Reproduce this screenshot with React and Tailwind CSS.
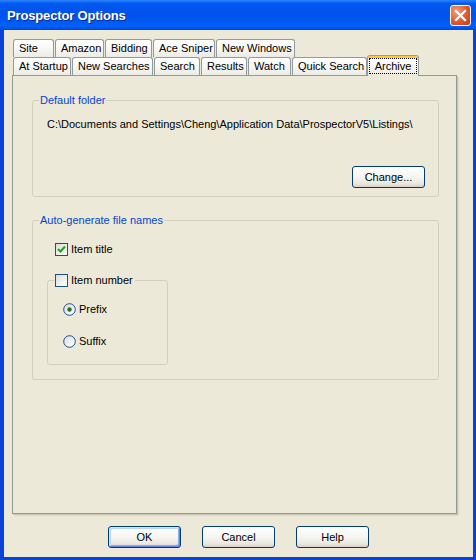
import React from 'react';

const row1 = [
  { label: 'Site', w: 'w-[41px]' },
  { label: 'Amazon', w: 'w-[49px]' },
  { label: 'Bidding', w: 'w-[47px]' },
  { label: 'Ace Sniper', w: 'w-[62px]' },
  { label: 'New Windows', w: 'w-[79px]' },
];

const row2 = [
  { label: 'At Startup', w: 'w-[58px]' },
  { label: 'New Searches', w: 'w-[81px]' },
  { label: 'Search', w: 'w-[46px]' },
  { label: 'Results', w: 'w-[46px]' },
  { label: 'Watch', w: 'w-[43px]' },
  { label: 'Quick Search', w: 'w-[75px]' },
];

const Tab = ({ label, w }) => (
  <div className={`${w} h-[18px] shrink-0 border border-b-0 border-[#919b9c] rounded-t-[3px] bg-[linear-gradient(#ffffff,#f7f7f4_50%,#ecebe5)] pl-[5px] leading-[17px] whitespace-nowrap`}>
    {label}
  </div>
);

const ActiveTab = ({ label }) => (
  <div className="relative z-10 -ml-[1px] -mt-[2px] self-start w-[52px] h-[21px] shrink-0 border border-b-0 border-[#919b9c] border-t-[#e68b2c] rounded-t-[3px] bg-[linear-gradient(#ffffff,#f8f7f2_60%,#ece9d8)] shadow-[inset_0_2px_0_#ffc73c] pt-[2px] px-[1px]">
    <div className="h-[16px] border border-dotted border-black text-center leading-[14px]">{label}</div>
  </div>
);

const Button = ({ children, primary }) => (
  <button
    className={`w-[73px] h-[22px] shrink-0 border border-[#003c74] rounded-[3px] bg-[linear-gradient(#ffffff,#f4f4f0_55%,#e8e6df_85%,#d6d0c5)] text-[11px] text-black leading-[20px] text-center ${
      primary ? 'shadow-[inset_1px_1px_0_#cee7ff,inset_-1px_-1px_0_#6982ee,inset_2px_2px_0_#bcd4f6,inset_-2px_-2px_0_#89ade4]' : ''
    }`}
  >
    {children}
  </button>
);

const Check = ({ label, checked }) => (
  <div className="flex items-center gap-[3px] h-[13px] leading-[13px] whitespace-nowrap">
    <span className="w-[13px] h-[13px] shrink-0 border border-[#1c5180] bg-[linear-gradient(135deg,#dcdcd7,#ffffff)] flex items-center justify-center">
      {checked && (
        <svg width="11" height="11" viewBox="0 0 11 11">
          <polyline points="2,5 4.5,7.5 9,2.5" fill="none" stroke="#21a121" strokeWidth="2" />
        </svg>
      )}
    </span>
    <span>{label}</span>
  </div>
);

const Radio = ({ label, checked }) => (
  <div className="flex items-center gap-[3px] h-[13px] leading-[13px] whitespace-nowrap">
    <svg width="13" height="13" viewBox="0 0 13 13" className="shrink-0">
      <defs>
        <linearGradient id="rg" x1="0" y1="0" x2="1" y2="1">
          <stop offset="0" stopColor="#dcdcd7" />
          <stop offset="1" stopColor="#ffffff" />
        </linearGradient>
      </defs>
      <circle cx="6.5" cy="6.5" r="5.8" fill="url(#rg)" stroke="#1c5180" strokeWidth="1" />
      {checked && <circle cx="6.5" cy="6.5" r="2.2" fill="#2d6a2d" />}
    </svg>
    <span>{label}</span>
  </div>
);

export default function App() {
  return (
    <div className="w-[476px] h-[560px] flex flex-col bg-[#0842d6] font-['Liberation_Sans',Arial,sans-serif] text-[11px] text-black select-none">
      {/* Title bar */}
      <div className="h-[30px] shrink-0 flex items-center pl-[7px] pr-[5px] bg-[linear-gradient(to_bottom,#2b83ff_0%,#0058ee_12%,#0052ea_50%,#0060fa_88%,#0048d8_100%)]">
        <span className="flex-1 pt-[1px] text-white font-bold text-[13px] tracking-[-0.15px] [text-shadow:1px_1px_0_#0a2a8a]">Prospector Options</span>
        <div className="w-[21px] h-[21px] border border-white rounded-[3px] bg-[radial-gradient(circle_at_30%_30%,#f2a182,#e0582e_55%,#c23c14)] flex items-center justify-center">
          <svg width="13" height="13" viewBox="0 0 13 13">
            <path d="M2 2 L11 11 M11 2 L2 11" stroke="#ffffff" strokeWidth="2.2" strokeLinecap="square" />
          </svg>
        </div>
      </div>

      {/* Dialog body */}
      <div className="flex-1 ml-[4px] mr-[3px] mb-[3px] bg-[#ece9d8] flex flex-col pt-[9px] pl-[8px] pr-[16px] pb-[9px]">
        <div className="flex gap-[1px] pl-[1px] h-[18px]">
          {row1.map((t) => (
            <Tab key={t.label} {...t} />
          ))}
        </div>
        <div className="flex gap-[1px] pl-[1px] h-[18px]">
          {row2.map((t) => (
            <Tab key={t.label} {...t} />
          ))}
          <ActiveTab label="Archive" />
        </div>

        {/* Tab panel */}
        <div className="h-[439px] shrink-0 flex flex-col border border-[#919b9c] bg-[#ece9d8] shadow-[1px_1px_0_#c9c6b6,2px_2px_0_#dddacb]">
          <fieldset className="h-[103px] mt-[18px] ml-[19px] mr-[17px] border border-[#d0d0bf] rounded-[3px] px-[6px] flex flex-col">
            <legend className="px-[1px] leading-[13px] text-[#0046d5]">Default folder</legend>
            <div className="mt-[11px] pl-[8px] leading-[13px] whitespace-nowrap">
              {'C:\\Documents and Settings\\Cheng\\Application Data\\ProspectorV5\\Listings\\'}
            </div>
            <div className="mt-[35px] pr-[7px] flex justify-end">
              <Button>Change...</Button>
            </div>
          </fieldset>

          <fieldset className="h-[166px] mt-[17px] ml-[19px] mr-[17px] border border-[#d0d0bf] rounded-[3px] px-[6px] flex flex-col">
            <legend className="px-[1px] leading-[13px] text-[#0046d5]">Auto-generate file names</legend>
            <div className="mt-[16px] pl-[16px]">
              <Check label="Item title" checked />
            </div>
            <fieldset className="mt-[18px] ml-[8px] w-[121px] h-[91px] border border-[#d0d0bf] rounded-[3px] px-[6px] flex flex-col">
              <legend className="pl-[1px] pr-[2px]">
                <Check label="Item number" />
              </legend>
              <div className="mt-[16px] pl-[9px]">
                <Radio label="Prefix" checked />
              </div>
              <div className="mt-[19px] pl-[9px]">
                <Radio label="Suffix" />
              </div>
            </fieldset>
          </fieldset>
        </div>

        {/* Dialog buttons */}
        <div className="mt-[12px] pl-[8px] flex justify-center gap-[21px]">
          <Button primary>OK</Button>
          <Button>Cancel</Button>
          <Button>Help</Button>
        </div>
      </div>
    </div>
  );
}
